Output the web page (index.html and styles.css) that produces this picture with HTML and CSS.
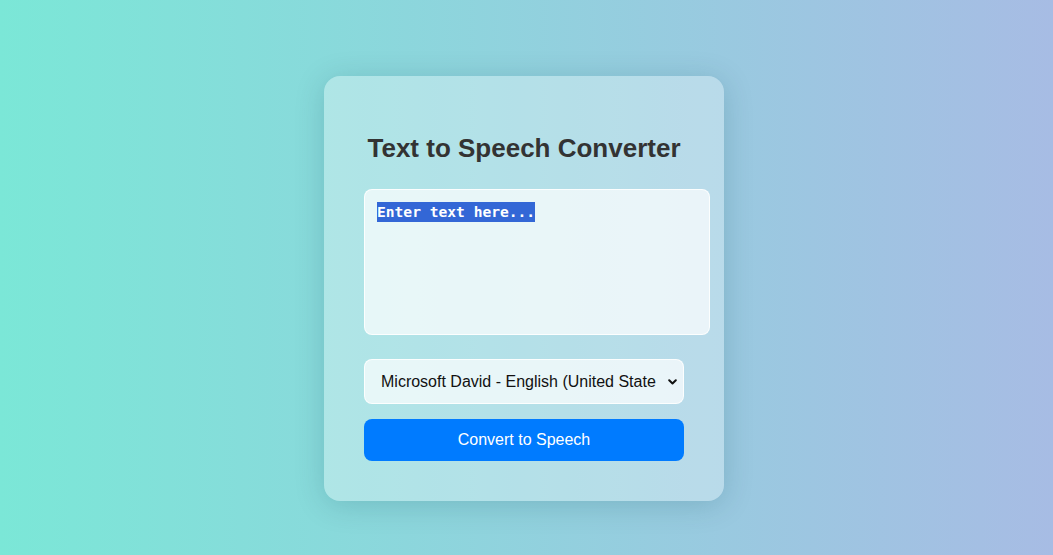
FILE: index.html
```html
<!DOCTYPE html>
<html lang="en">
<head>
<meta charset="utf-8">
<title>Text to Speech Converter</title>
<link rel="stylesheet" href="styles.css">
</head>
<body>
<main class="card">
  <h1 class="title">Text to Speech Converter</h1>
  <div class="textbox"><span class="sel">Enter text here...</span></div>
  <div class="select">
    <span class="select-text">Microsoft David - English (United States)</span>
    <svg class="chev" width="9" height="6" viewBox="0 0 9 6"><path d="M1.2 1.2 L4.5 4.5 L7.8 1.2" fill="none" stroke="#111" stroke-width="2" stroke-linecap="round" stroke-linejoin="round"/></svg>
  </div>
  <button class="btn">Convert to Speech</button>
</main>
</body>
</html>
```
FILE: styles.css
```css
html, body {
  margin: 0;
  padding: 0;
  height: 100%;
}
body {
  background: linear-gradient(to right, #7be7d7, #a7bce4);
  font-family: "Liberation Sans", Arial, sans-serif;
  display: flex;
  justify-content: center;
  align-items: flex-start;
  padding-right: 5px;
  box-sizing: border-box;
}
.card {
  margin-top: 76px;
  width: 400px;
  box-sizing: border-box;
  padding: 40px;
  background: rgba(255, 255, 255, 0.32);
  border-radius: 16px;
  box-shadow: 0 4px 30px rgba(0, 60, 80, 0.18);
  display: flex;
  flex-direction: column;
}
.title {
  margin: 17px 0 26px;
  font-size: 26px;
  line-height: 30px;
  font-weight: 700;
  color: #333;
  text-align: center;
}
.textbox {
  width: 346px;
  height: 146px;
  box-sizing: border-box;
  padding: 12px;
  border: 1px solid rgba(255, 255, 255, 0.85);
  border-radius: 8px;
  background: rgba(255, 255, 255, 0.7);
  font-family: "DejaVu Sans Mono", "Liberation Mono", monospace;
  font-size: 14.6px;
  line-height: 19px;
  font-weight: 700;
}
.sel {
  background: #3367d6;
  color: #fff;
  padding: 1px 0 2px;
}
.select {
  margin-top: 24px;
  width: 320px;
  height: 45px;
  box-sizing: border-box;
  border: 1px solid rgba(255, 255, 255, 0.85);
  border-radius: 8px;
  background: rgba(255, 255, 255, 0.7);
  display: flex;
  align-items: center;
  padding: 0 6px 0 16px;
  gap: 12px;
  font-size: 16px;
  color: #111;
}
.select-text {
  flex: 1;
  overflow: hidden;
  white-space: nowrap;
}
.chev {
  flex: none;
}
.btn {
  margin-top: 15px;
  width: 320px;
  height: 42px;
  border: none;
  border-radius: 8px;
  background: #007bff;
  color: #fff;
  font-family: "Liberation Sans", Arial, sans-serif;
  font-size: 16px;
  padding: 0;
}
```
